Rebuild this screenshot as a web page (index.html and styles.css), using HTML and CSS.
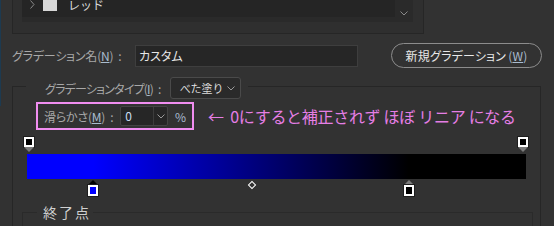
FILE: index.html
```html
<!DOCTYPE html>
<html lang="ja">
<head>
    <meta charset="UTF-8">
    <title>グラデーションエディター</title>
    <link rel="stylesheet" href="styles.css">
</head>
<body>
    <div class="preset-panel">
        <div class="preset-list">
            <div class="preset-items">
                <div class="preset-row">
                    <svg class="twisty" width="5" height="9" viewBox="0 0 5 9"><path d="M0.5 0.5 L4 4.5 L0.5 8.5" fill="none" stroke="#8a8a8a" stroke-width="1"/></svg>
                    <span class="swatch"></span>
                    <span class="preset-name">レッド</span>
                </div>
            </div>
            <div class="preset-scroll">
                <svg width="8" height="5" viewBox="0 0 8 5"><path d="M0.5 0.5 L4 4 L7.5 0.5" fill="none" stroke="#8a8a8a" stroke-width="1"/></svg>
            </div>
        </div>
    </div>

    <div class="name-row">
        <span class="field-label name-label">グラデーション名(<u>N</u>)<span class="colon">:</span></span>
        <input class="text-input" type="text" value="カスタム">
        <button class="pill-btn">新規グラデーション<span class="key">(<u>W</u>)</span></button>
    </div>

    <fieldset class="type-group">
        <legend class="type-legend">
            <span class="field-label type-label">グラデーションタイプ(<u>I</u>)<span class="colon">:</span></span>
            <div class="select">
                <span>べた塗り</span>
                <svg width="8" height="5" viewBox="0 0 8 5"><path d="M0.5 0.5 L4 4 L7.5 0.5" fill="none" stroke="#9a9a9a" stroke-width="1"/></svg>
            </div>
        </legend>

        <div class="smooth-row">
            <div class="smooth-box">
                <span class="field-label smooth-label">滑らかさ(<u>M</u>)<span class="colon">:</span></span>
                <div class="combo">
                    <span class="combo-value">0</span>
                    <span class="combo-arrow">
                        <svg width="8" height="5" viewBox="0 0 8 5"><path d="M0.5 0.5 L4 4 L7.5 0.5" fill="none" stroke="#9a9a9a" stroke-width="1"/></svg>
                    </span>
                </div>
                <span class="unit">%</span>
            </div>
            <span class="note">←&nbsp; 0にすると補正されず ほぼ リニア になる</span>
        </div>

        <div class="gradient-editor">
            <div class="opacity-stop" style="left: -3px"></div>
            <div class="opacity-stop" style="left: 491px"></div>
            <div class="gradient-bar"></div>
            <div class="color-stop selected" style="left: 13.3%"><span class="chip blue"></span></div>
            <div class="midpoint" style="left: 45.1%"></div>
            <div class="color-stop" style="left: 76.5%"><span class="chip black"></span></div>
        </div>

        <fieldset class="end-group">
            <legend class="end-legend">終了点</legend>
        </fieldset>
    </fieldset>
</body>
</html>
```

FILE: styles.css
```css
* {
    box-sizing: border-box;
}
body {
    margin: 0;
    height: 226px;
    overflow: hidden;
    position: relative;
    background-color: #323232;
    font-family: "Noto Sans CJK JP", "Noto Sans", sans-serif;
    font-size: 11px;
    color: #a8a8a8;
}
body::before {
    content: "";
    position: absolute;
    left: 0;
    top: 0;
    width: 1px;
    height: 106px;
    background-color: #1d3a50;
}
u {
    text-decoration: underline;
    text-underline-offset: 1px;
}

/* preset list (scrolled) */
.preset-panel {
    margin-left: 12px;
    width: 412px;
    height: 34px;
    padding-left: 9px;
    background-color: #2f2f2f;
    border: 1px solid #262626;
    border-top: none;
}
.preset-list {
    display: flex;
    width: 391px;
    height: 22px;
    background-color: #2a2a2a;
}
.preset-items {
    width: 373px;
    height: 17px;
    overflow: hidden;
    background-color: #252525;
}
.preset-row {
    display: flex;
    align-items: center;
    height: 24px;
    margin-top: -8px;
    padding-left: 8px;
}
.twisty {
    flex: none;
}
.swatch {
    width: 14px;
    height: 14px;
    margin-left: 8px;
    background-color: #d8d8d8;
}
.preset-name {
    margin-left: 11px;
    font-size: 12px;
    color: #d8d8d8;
}
.preset-scroll {
    width: 18px;
    height: 22px;
    display: flex;
    justify-content: center;
    align-items: flex-end;
    padding-bottom: 6px;
}

/* labels */
.field-label {
    font-size: 12px;
    font-feature-settings: "palt";
    letter-spacing: -0.2px;
    white-space: nowrap;
    color: #a8a8a8;
}
.type-label {
    letter-spacing: -0.8px;
}
.field-label u,
.key {
    color: #a9bccf;
}
.colon {
    margin-left: 5px;
}

/* name row */
.name-row {
    display: flex;
    align-items: center;
    height: 25px;
    margin-top: 9px;
    padding-left: 12px;
}
.name-label {
    width: 123px;
}
.text-input {
    width: 223px;
    height: 22px;
    padding: 0 0 1px 3px;
    background-color: #262626;
    border: 1px solid #3e3e3e;
    color: #e6e6e6;
    font-family: inherit;
    font-size: 12px;
    font-feature-settings: "palt";
    outline: none;
}
.pill-btn {
    width: 151px;
    height: 25px;
    margin-left: 33px;
    padding: 0 0 1px 0;
    background-color: transparent;
    border: 1px solid #8c8c8c;
    border-radius: 13px;
    color: #e8e8e8;
    font-family: inherit;
    font-size: 12px;
    font-feature-settings: "palt";
    letter-spacing: 0.2px;
}
.key {
    margin-left: 2px;
}

/* gradient type group */
.type-group {
    margin: 5px 0 0 12px;
    width: 529px;
    height: 170px;
    padding: 0;
    border: 1px solid #262626;
    border-bottom: none;
}
.type-legend {
    display: flex;
    align-items: center;
    margin-left: 13px;
    padding: 4px 7px 0 19px;
}
.select {
    flex: none;
    display: flex;
    align-items: center;
    justify-content: space-between;
    width: 71px;
    height: 22px;
    margin-left: 9px;
    padding: 0 5px 0 9px;
    background-color: #2a2a2a;
    border: 1px solid #4a4a4a;
    border-radius: 3px;
    color: #dcdcdc;
    font-size: 11px;
}

/* smoothness */
.smooth-row {
    display: flex;
    align-items: center;
    margin: 3px 0 0 23px;
}
.smooth-box {
    display: flex;
    align-items: center;
    width: 158px;
    height: 28px;
    padding: 0 6px;
    border: 2px solid #f08ef0;
}
.smooth-label {
    width: 77px;
}
.combo {
    display: flex;
    width: 48px;
    height: 20px;
    background-color: #262626;
    border: 1px solid #434343;
    border-radius: 2px;
}
.combo-value {
    width: 32px;
    padding-left: 4px;
    line-height: 18px;
    color: #c8ddf2;
    font-size: 12px;
}
.combo-arrow {
    flex: 1;
    display: flex;
    align-items: center;
    justify-content: center;
    border-left: 1px solid #3c3c3c;
}
.unit {
    margin-left: 7px;
    color: #a9bccf;
    font-size: 12px;
}
.note {
    margin-left: 14px;
    font-size: 16px;
    letter-spacing: -0.3px;
    color: #e57ee5;
    white-space: nowrap;
}

/* gradient editor */
.gradient-editor {
    position: relative;
    width: 499px;
    margin: 7px 0 0 14px;
    padding: 17px 0;
}
.gradient-bar {
    height: 25px;
    background: linear-gradient(to right, #0000ff 13.3%, #000000 76.5%);
}
.opacity-stop {
    position: absolute;
    top: 0;
    width: 10px;
    height: 10px;
    background-color: #000;
    border: 2px solid #fff;
    outline: 1px solid #1e1e1e;
}
.opacity-stop::after {
    content: "";
    position: absolute;
    left: -2px;
    top: 8px;
    border-left: 5px solid transparent;
    border-right: 5px solid transparent;
    border-top: 5px solid #7a7a7a;
}
.color-stop {
    position: absolute;
    top: 43px;
    width: 10px;
    transform: translateX(-50%);
    display: flex;
    flex-direction: column;
    align-items: center;
}
.color-stop::before {
    content: "";
    border-left: 5px solid transparent;
    border-right: 5px solid transparent;
    border-bottom: 5px solid #7a7a7a;
}
.color-stop.selected::before {
    border-bottom-color: #000;
}
.chip {
    width: 10px;
    height: 11px;
    border: 2px solid #fff;
    outline: 1px solid #1e1e1e;
}
.chip.blue {
    background-color: #0000ff;
}
.chip.black {
    background-color: #000;
}
.midpoint {
    position: absolute;
    top: 45px;
    width: 6px;
    height: 6px;
    margin-left: -3px;
    border: 1px solid #fff;
    transform: rotate(45deg);
}

/* end point group */
.end-group {
    margin: 8px 7px 0 9px;
    height: 40px;
    padding: 0;
    border: 1px solid #2a2a2a;
    border-bottom: none;
}
.end-legend {
    margin-left: 14px;
    padding: 0 2px 0 6px;
    font-size: 14px;
    line-height: 16px;
    letter-spacing: 2px;
    color: #d0d0d0;
}
```
